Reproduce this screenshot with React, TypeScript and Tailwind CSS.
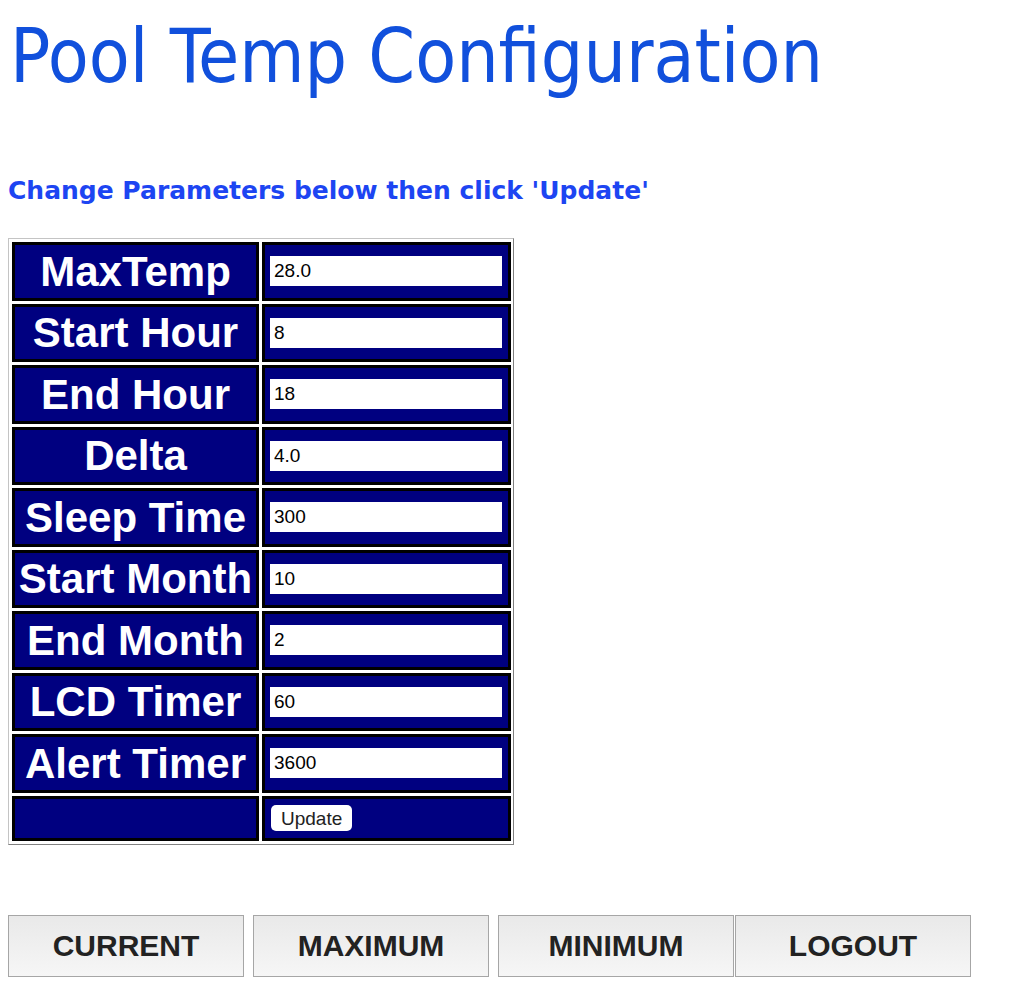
const params = [
  { label: 'MaxTemp', value: '28.0' },
  { label: 'Start Hour', value: '8' },
  { label: 'End Hour', value: '18' },
  { label: 'Delta', value: '4.0' },
  { label: 'Sleep Time', value: '300' },
  { label: 'Start Month', value: '10' },
  { label: 'End Month', value: '2' },
  { label: 'LCD Timer', value: '60' },
  { label: 'Alert Timer', value: '3600' },
];

const navButtons = ['CURRENT', 'MAXIMUM', 'MINIMUM', 'LOGOUT'];

export default function App() {
  return (
    <div className="min-h-screen bg-white px-2 pt-[12px]">
      {/* Heading */}
      <h1 className="font-['DejaVu_Sans',sans-serif] font-stretch-condensed text-[74.5px] leading-[90px] text-[#1150dc] pl-[2px]">
        Pool Temp Configuration
      </h1>

      <h3 className="mt-[74px] font-['DejaVu_Sans',sans-serif] font-bold text-[25px] leading-[30px] text-[#1d45f2]">
        Change Parameters below then click 'Update'
      </h3>

      {/* Parameter table */}
      <div className="mt-[32px] w-[506px] border border-[#c4c4c4] border-r-[#808080] border-b-[#808080] p-[3px] font-['Liberation_Sans',Arial,sans-serif]">
        <div className="grid grid-cols-[247px_249px] gap-x-[3px] gap-y-[3px]">
          {params.map((p) => (
            <div key={p.label} className="contents">
              <div className="h-[58.5px] flex items-center justify-center bg-[#000080] border-[3px] border-black text-white font-bold text-[42px] whitespace-nowrap">
                {p.label}
              </div>
              <div className="h-[58.5px] flex items-center bg-[#000080] border-[3px] border-black pl-[5px]">
                <input
                  type="text"
                  defaultValue={p.value}
                  className="w-[232px] h-[30px] bg-white px-[4px] text-[19px] text-black outline-none font-['Liberation_Sans',Arial,sans-serif]"
                />
              </div>
            </div>
          ))}
          <div className="h-[45px] bg-[#000080] border-[3px] border-black" />
          <div className="h-[45px] flex items-center bg-[#000080] border-[3px] border-black pl-[6px]">
            <button className="h-[26px] px-[10px] rounded-[5px] bg-white text-[19px] leading-none text-[#222]">
              Update
            </button>
          </div>
        </div>
      </div>

      {/* Navigation buttons */}
      <div className="mt-[70px] flex font-['Liberation_Sans',Arial,sans-serif]">
        {navButtons.map((b, i) => (
          <button
            key={b}
            className={`w-[236px] h-[62px] border border-[#a6a6a6] bg-gradient-to-b from-[#e9e9e9] to-[#f6f6f6] text-[30px] font-bold text-[#222] ${
              i === 3 ? 'ml-[1px]' : i > 0 ? 'ml-[9px]' : ''
            }`}
          >
            {b}
          </button>
        ))}
      </div>
    </div>
  );
}
